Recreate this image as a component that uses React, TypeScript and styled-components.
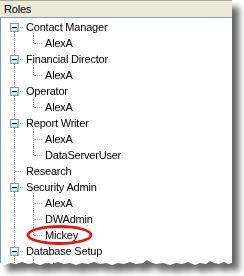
import styled, { createGlobalStyle } from 'styled-components';

const GlobalStyle = createGlobalStyle`
  html, body {
    margin: 0;
    padding: 0;
    background: #fff;
    overflow: hidden;
  }
  body {
    width: 244px;
    height: 276px;
    font-family: 'Liberation Sans', Arial, sans-serif;
  }
`;

type Line = 'full' | 'lower' | 'upper';

type RoleNode = {
	label: string;
	children?: RoleNode[];
	marked?: boolean;
};

type RowData = {
	label: string;
	level: 0 | 1;
	line: Line;
	hasBox: boolean;
	marked?: boolean;
};

const roles: RoleNode[] = [
	{ label: 'Contact Manager', children: [{ label: 'AlexA' }] },
	{ label: 'Financial Director', children: [{ label: 'AlexA' }] },
	{ label: 'Operator', children: [{ label: 'AlexA' }] },
	{
		label: 'Report Writer',
		children: [{ label: 'AlexA' }, { label: 'DataServerUser' }],
	},
	{ label: 'Research' },
	{
		label: 'Security Admin',
		children: [
			{ label: 'AlexA' },
			{ label: 'DWAdmin' },
			{ label: 'Mickey', marked: true },
		],
	},
	{ label: 'Database Setup', children: [{ label: 'AlexA' }] },
];

const flatten = (nodes: RoleNode[]): RowData[] =>
	nodes.flatMap((node, i) => [
		{
			label: node.label,
			level: 0 as const,
			line: (i === 0 ? 'lower' : 'full') as Line,
			hasBox: !!node.children,
		},
		...(node.children ?? []).map((child, j, list) => ({
			label: child.label,
			level: 1 as const,
			line: (j === list.length - 1 ? 'upper' : 'full') as Line,
			hasBox: false,
			marked: child.marked,
		})),
	]);

const ShadowWrap = styled.div`
	width: 232px;
	filter: drop-shadow(7px 7px 3px rgba(0, 0, 0, 0.6));
`;

// torn paper edge along the bottom
const Panel = styled.div`
	width: 232px;
	height: 270px;
	background: #fff;
	overflow: hidden;
	clip-path: polygon(
		0 0,
		232px 0,
		232px 263px,
		228px 264px,
		224px 262px,
		219px 264px,
		214px 263px,
		210px 261px,
		206px 264px,
		200px 263px,
		195px 265px,
		188px 262px,
		182px 264px,
		176px 263px,
		170px 265px,
		163px 263px,
		156px 264px,
		150px 262px,
		147px 260px,
		143px 263px,
		136px 264px,
		130px 262px,
		124px 264px,
		118px 263px,
		112px 265px,
		106px 263px,
		100px 264px,
		94px 262px,
		88px 264px,
		82px 263px,
		76px 265px,
		70px 263px,
		64px 264px,
		58px 262px,
		52px 264px,
		46px 263px,
		40px 265px,
		34px 263px,
		28px 264px,
		22px 262px,
		16px 264px,
		10px 263px,
		4px 265px,
		0 263px
	);
`;

const Header = styled.div`
	box-sizing: border-box;
	height: 17px;
	border-top: 1px solid #aca899;
	background: #ebe9d8;
	padding-left: 4px;
	font-size: 11px;
	line-height: 16px;
	letter-spacing: -0.2px;
	color: #000;
`;

const Tree = styled.div`
	height: 100%;
	border-top: 1px solid #7f9db9;
	border-left: 1px solid #7f9db9;
	padding: 1px 0 0 4px;
`;

const Row = styled.div`
	position: relative;
	display: flex;
	align-items: center;
	height: 16px;
`;

const Guide = styled.span<{ $line?: Line; $branch?: boolean }>`
	position: relative;
	flex: 0 0 19px;
	align-self: stretch;

	&::before {
		content: '';
		position: absolute;
		left: 9px;
		top: ${({ $line }) => ($line === 'lower' ? '8px' : '0')};
		bottom: ${({ $line }) => ($line === 'upper' ? '8px' : '0')};
		border-left: 1px dotted #a0a0a0;
	}

	&::after {
		content: '';
		display: ${({ $branch }) => ($branch ? 'block' : 'none')};
		position: absolute;
		left: 10px;
		right: 1px;
		top: 8px;
		border-top: 1px dotted #a0a0a0;
	}
`;

const Toggle = styled.span`
	position: absolute;
	left: 5px;
	top: 4px;
	width: 7px;
	height: 7px;
	border: 1px solid #7f9db9;
	background: linear-gradient(135deg, #ffffff 0%, #f3f2ec 45%, #c9c5b5 100%);
	z-index: 1;

	&::after {
		content: '';
		position: absolute;
		left: 1px;
		top: 3px;
		width: 5px;
		height: 1px;
		background: #000;
	}
`;

const Label = styled.span`
	padding-left: 2px;
	font-size: 11px;
	line-height: 16px;
	letter-spacing: -0.2px;
	color: #000;
	white-space: nowrap;
`;

const Marker = styled.svg`
	position: absolute;
	left: 20px;
	top: -3px;
	overflow: visible;
	pointer-events: none;
`;

const TreeRow = ({ row }: { row: RowData }) => (
	<Row>
		{row.level === 0 ? (
			<Guide $line={row.line} $branch>
				{row.hasBox && <Toggle />}
			</Guide>
		) : (
			<>
				<Guide $line="full" />
				<Guide $line={row.line} $branch />
			</>
		)}
		<Label>{row.label}</Label>
		{row.marked && (
			<Marker width="70" height="22" viewBox="0 0 70 22">
				<ellipse
					cx="34.5"
					cy="11"
					rx="31.5"
					ry="8.5"
					fill="none"
					stroke="#ee1111"
					strokeWidth="2.8"
				/>
			</Marker>
		)}
	</Row>
);

const App = () => {
	const rows = flatten(roles);

	return (
		<>
			<GlobalStyle />
			<ShadowWrap>
				<Panel>
					<Header>Roles</Header>
					<Tree>
						{rows.map((row, i) => (
							<TreeRow key={i} row={row} />
						))}
					</Tree>
				</Panel>
			</ShadowWrap>
		</>
	);
};

export default App;
